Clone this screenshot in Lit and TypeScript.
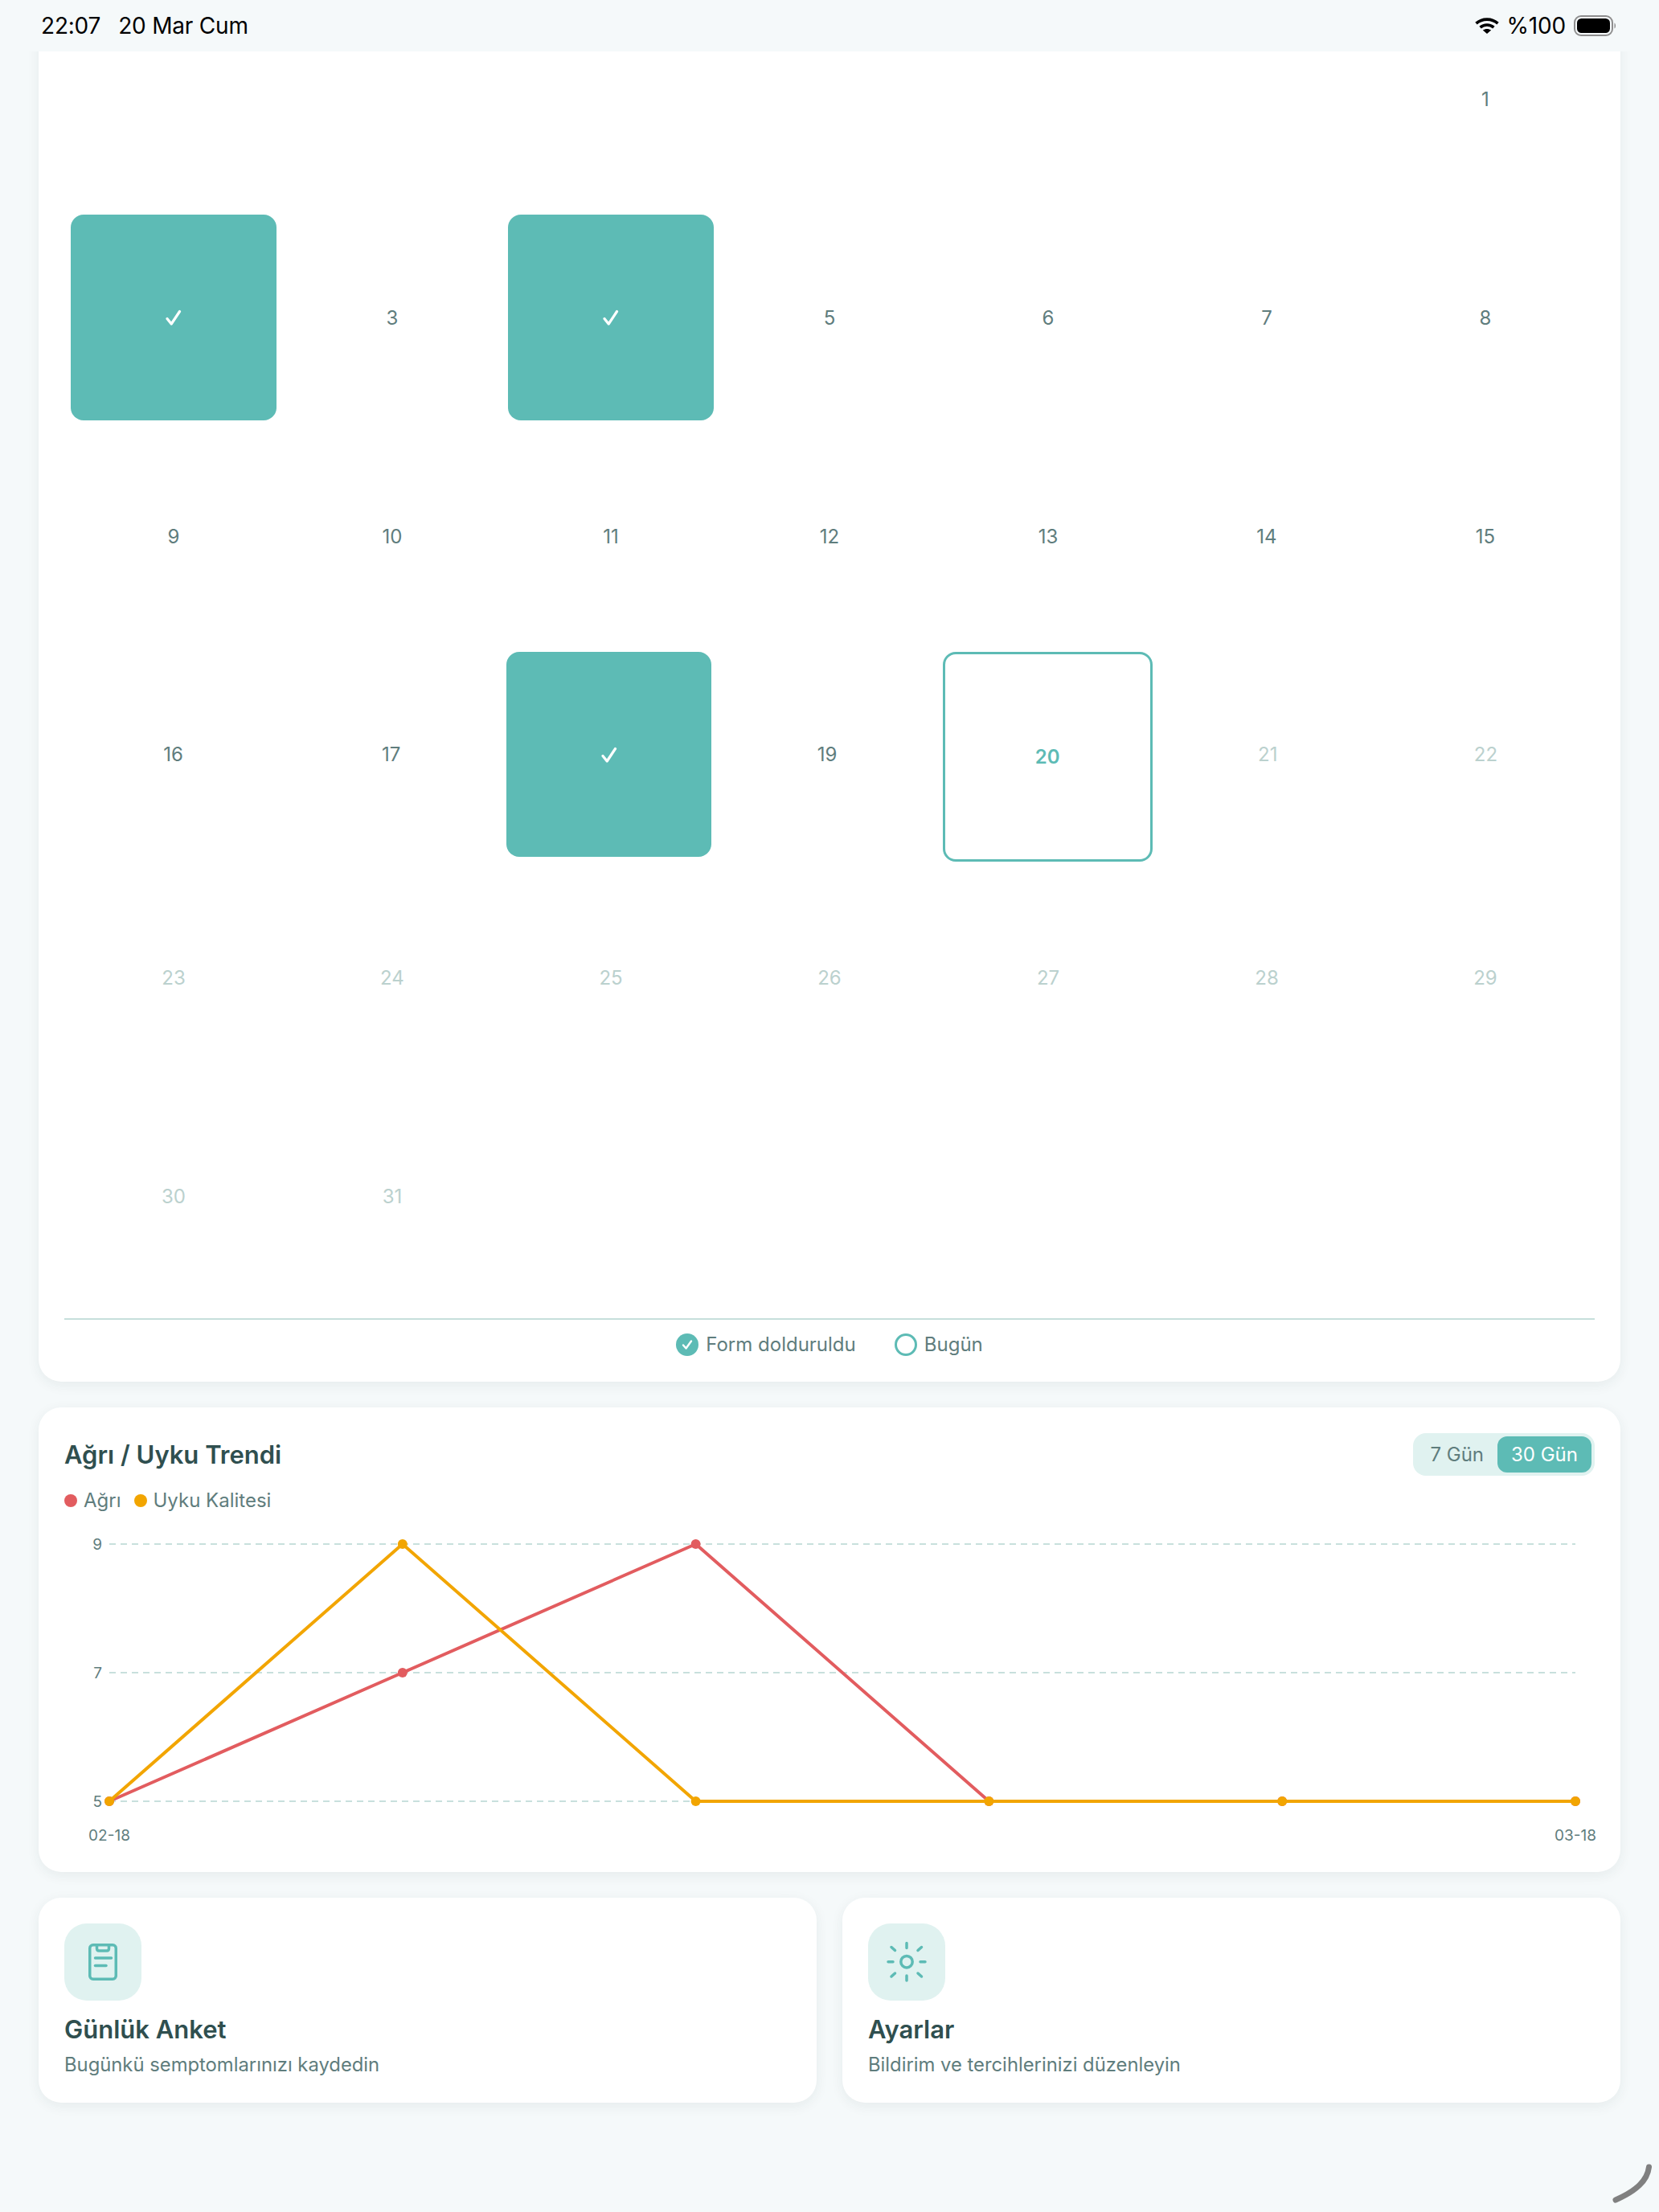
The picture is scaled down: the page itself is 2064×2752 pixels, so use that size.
import { LitElement, html, css, svg } from "lit";
import { customElement } from "lit/decorators.js";

type Day = { n?: number; s?: "done" | "today" | "future" | "" };

const past = (n: number): Day => ({ n, s: "" });
const done = (n: number): Day => ({ n, s: "done" });
const fut = (n: number): Day => ({ n, s: "future" });
const blank: Day = {};

const WEEKS: Day[][] = [
  [blank, blank, blank, blank, blank, blank, past(1)],
  [done(2), past(3), done(4), past(5), past(6), past(7), past(8)],
  [past(9), past(10), past(11), past(12), past(13), past(14), past(15)],
  [past(16), past(17), done(18), past(19), { n: 20, s: "today" }, fut(21), fut(22)],
  [fut(23), fut(24), fut(25), fut(26), fut(27), fut(28), fut(29)],
  [fut(30), fut(31), blank, blank, blank, blank, blank],
];

const X = [56, 420.8, 785.6, 1150.4, 1515.2, 1880];
const yOf = (v: number) => 29 + ((9 - v) / 4) * 320;
const RED = [5, 7, 9, 5, 5, 5];
const ORANGE = [5, 9, 5, 5, 5, 5];

@customElement("app-root")
export class AppRoot extends LitElement {
  static styles = css`
    :host {
      display: block;
      position: relative;
      height: 2752px;
      overflow: hidden;
      background: #f5f9fa;
      font-family: Inter, "Noto Sans", sans-serif;
      color: #5f7d7d;
    }
    .status {
      position: relative;
      z-index: 2;
      height: 64px;
      background: #f5f9fa;
      display: flex;
      align-items: center;
      justify-content: space-between;
      padding: 0 53px 0 51px;
      color: #000;
      font-size: 28px;
      line-height: 34px;
      letter-spacing: -0.2px;
    }
    .status-left {
      display: flex;
      gap: 22px;
    }
    .status-right {
      display: flex;
      align-items: center;
      gap: 10px;
    }
    .status-right svg {
      display: block;
    }
    .content {
      padding: 0 48px;
      display: flex;
      flex-direction: column;
      gap: 32px;
    }
    .card {
      background: #fff;
      border-radius: 28px;
      padding: 32px;
      box-shadow: 0 4px 16px rgba(30, 60, 60, 0.07);
    }
    .calendar {
      margin-top: -109px;
      padding-bottom: 31px;
    }
    .week {
      display: flex;
      align-items: flex-start;
    }
    .cell {
      flex: 1 1 0;
      min-width: 0;
      margin: 8px;
      aspect-ratio: 1 / 1;
      border-radius: 16px;
      display: flex;
      align-items: center;
      justify-content: center;
      font-size: 24px;
      color: #5f7d7d;
    }
    .cell.future {
      color: #bbd1ce;
    }
    .cell.done {
      background: #5dbbb5;
    }
    .cell.today {
      border: 3px solid #5dbbb5;
      color: #5dbbb5;
      font-weight: 600;
    }
    .cell svg {
      display: block;
    }
    .legend {
      margin-top: 16px;
      border-top: 2px solid #c6dfdc;
      padding-top: 16px;
      display: flex;
      justify-content: center;
      gap: 48px;
      font-size: 24px;
      line-height: 30px;
    }
    .legend-item {
      display: flex;
      align-items: center;
      gap: 9px;
    }
    .legend-check {
      width: 28px;
      height: 28px;
      border-radius: 50%;
      background: #5dbbb5;
      display: flex;
      align-items: center;
      justify-content: center;
    }
    .legend-ring {
      width: 28px;
      height: 28px;
      box-sizing: border-box;
      border-radius: 50%;
      border: 3px solid #5dbbb5;
    }
    .trend-head {
      display: flex;
      align-items: center;
      justify-content: space-between;
    }
    .title {
      font-size: 31px;
      line-height: 40px;
      font-weight: 600;
      color: #2f4f4f;
    }
    .toggle {
      display: flex;
      background: #e0f2f0;
      border-radius: 16px;
      padding: 4px;
      font-size: 24px;
      line-height: 45px;
    }
    .toggle span {
      padding: 0 17px;
      border-radius: 12px;
    }
    .toggle .on {
      background: #5dbbb5;
      color: #fff;
    }
    .series {
      margin-top: 16px;
      display: flex;
      gap: 16px;
      font-size: 24px;
      line-height: 30px;
    }
    .series-item {
      display: flex;
      align-items: center;
      gap: 8px;
    }
    .dot {
      width: 16px;
      height: 16px;
      border-radius: 50%;
    }
    .red {
      background: #e25c5f;
    }
    .orange {
      background: #f2a500;
    }
    .chart {
      display: block;
      margin-top: 10px;
      overflow: visible;
    }
    .chart text {
      font-size: 19px;
      fill: #5f7d7d;
      font-family: Inter, "Noto Sans", sans-serif;
    }
    .actions {
      display: grid;
      grid-template-columns: 1fr 1fr;
      gap: 32px;
    }
    .icon {
      width: 96px;
      height: 96px;
      border-radius: 28px;
      background: #e0f2f0;
    }
    .icon svg {
      display: block;
    }
    .action .title {
      margin-top: 16px;
    }
    .sub {
      margin-top: 8px;
      font-size: 23.8px;
      line-height: 31px;
    }
    .home {
      position: absolute;
      right: 0;
      bottom: 0;
    }
  `;

  private cell(d: Day) {
    const check =
      d.s === "done"
        ? html`<svg width="20" height="22" viewBox="0 0 20 22" fill="none" stroke="#fff" stroke-width="3.2" stroke-linecap="round" stroke-linejoin="round"><path d="M2 12.500L7.200 19L17.500 3.500"></path></svg>`
        : d.n;
    return html`<div class="cell ${d.s ?? ""}">${check}</div>`;
  }

  private chart() {
    const pts = (a: number[]) => a.map((v, i) => `${X[i]},${yOf(v)}`).join(" ");
    return html`<svg class="chart" width="1904" height="405" viewBox="0 0 1904 405" fill="none">
      ${[9, 7, 5].map(
        (v) => svg`
          <line x1="56" x2="1880" y1=${yOf(v)} y2=${yOf(v)} stroke="#c8e0dd" stroke-width="2" stroke-dasharray="8 6"></line>
          <text x="47" y=${yOf(v) + 7} text-anchor="end">${v}</text>`
      )}
      <polyline points=${pts(RED)} stroke="#e25c5f" stroke-width="4" stroke-linejoin="round"></polyline>
      ${RED.map((v, i) => svg`<circle cx=${X[i]} cy=${yOf(v)} r="6" fill="#e25c5f"></circle>`)}
      <polyline points=${pts(ORANGE)} stroke="#f2a500" stroke-width="4" stroke-linejoin="round"></polyline>
      ${ORANGE.map((v, i) => svg`<circle cx=${X[i]} cy=${yOf(v)} r="6" fill="#f2a500"></circle>`)}
      <text x="56" y="398" text-anchor="middle">02-18</text>
      <text x="1880" y="398" text-anchor="middle">03-18</text>
    </svg>`;
  }

  render() {
    return html`
      <div class="status">
        <div class="status-left"><span>22:07</span><span>20 Mar Cum</span></div>
        <div class="status-right">
          <svg width="30" height="20" viewBox="0 0 30 20" fill="none" stroke="#000" stroke-width="3.6">
            <path d="M1.500 7.200C9 .4 21 .4 28.500 7.200"></path>
            <path d="M6.600 12.200C11.200 8 18.800 8 23.400 12.200"></path>
            <path d="M15 20L9.800 15.600C12.700 13.400 17.300 13.400 20.200 15.600Z" fill="#000" stroke="none"></path>
          </svg>
          <span>%100</span>
          <svg width="53" height="26" viewBox="0 0 53 26" fill="none">
            <rect x="1" y="1" width="47" height="24" rx="8" stroke="#8e8e8e" stroke-width="2"></rect>
            <rect x="4" y="4" width="41" height="18" rx="5.500" fill="#000"></rect>
            <path d="M50.500 9.500C52.500 10.500 52.500 15.500 50.500 16.500Z" fill="#8e8e8e"></path>
          </svg>
        </div>
      </div>
      <div class="content">
        <section class="card calendar">
          ${WEEKS.map((w) => html`<div class="week">${w.map((d) => this.cell(d))}</div>`)}
          <div class="legend">
            <div class="legend-item">
              <span class="legend-check">
                <svg width="14" height="14" viewBox="0 0 14 14" fill="none" stroke="#fff" stroke-width="2.4" stroke-linecap="round" stroke-linejoin="round"><path d="M2 7.500L5.500 11.500L12 2.500"></path></svg>
              </span>
              <span>Form dolduruldu</span>
            </div>
            <div class="legend-item"><span class="legend-ring"></span><span>Bugün</span></div>
          </div>
        </section>

        <section class="card">
          <div class="trend-head">
            <div class="title">Ağrı / Uyku Trendi</div>
            <div class="toggle"><span>7 Gün</span><span class="on">30 Gün</span></div>
          </div>
          <div class="series">
            <div class="series-item"><span class="dot red"></span><span>Ağrı</span></div>
            <div class="series-item"><span class="dot orange"></span><span>Uyku Kalitesi</span></div>
          </div>
          ${this.chart()}
        </section>

        <div class="actions">
          <section class="card action">
            <div class="icon">
              <svg width="96" height="96" viewBox="0 0 96 96" fill="none" stroke="#5dbbb5" stroke-width="3.500" stroke-linecap="round">
                <rect x="31.750" y="26.750" width="32.500" height="42.500" rx="4"></rect>
                <path d="M40.500 27V31C40.500 33 41.500 34 43 34H53C54.500 34 55.500 33 55.500 31V27" stroke-linecap="butt"></path>
                <path d="M38.500 43H58.500"></path>
                <path d="M38.500 52.500H52"></path>
              </svg>
            </div>
            <div class="title">Günlük Anket</div>
            <div class="sub">Bugünkü semptomlarınızı kaydedin</div>
          </section>
          <section class="card action">
            <div class="icon">
              <svg width="96" height="96" viewBox="0 0 96 96" fill="none" stroke="#5dbbb5" stroke-width="3.500" stroke-linecap="round">
                <circle cx="48" cy="47.700" r="7.200"></circle>
                <path d="M48 24.500V30.500M48 65V71M25 47.700H31M65 47.700H71M29 29.500L33.500 33.500M66.500 29.500L62 33.500M29 66L33.500 62M66.500 66L62 62"></path>
              </svg>
            </div>
            <div class="title">Ayarlar</div>
            <div class="sub">Bildirim ve tercihlerinizi düzenleyin</div>
          </section>
        </div>
      </div>
      <svg class="home" width="64" height="70" viewBox="0 0 64 70" fill="none">
        <path d="M51.500 14C49.500 31 36 43.500 10 55" stroke="#808080" stroke-width="7" stroke-linecap="round"></path>
      </svg>
    `;
  }
}
